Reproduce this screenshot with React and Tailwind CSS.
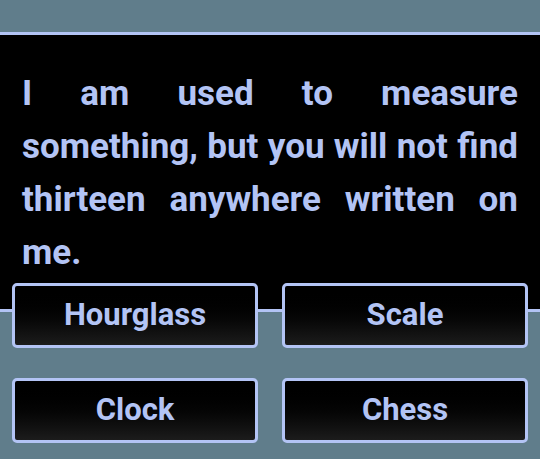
import React from "react";

const ANSWERS = ["Hourglass", "Scale", "Clock", "Chess"];

const AnswerButton = ({ label }) => (
  <button className="h-[65px] rounded-[5px] border-[3px] border-[#b3c4f5] bg-gradient-to-b from-[#000000] to-[#1c1c1c] text-[31px] font-bold text-[#b3c4f5]">
    {label}
  </button>
);

export default function App() {
  return (
    <div
      className="h-[459px] w-[540px] overflow-hidden bg-[#607d8b] pt-[32px]"
      style={{ fontFamily: "Roboto, 'Liberation Sans', sans-serif" }}
    >
      {/* Question */}
      <div className="border-y-[3px] border-[#b3c4f5] bg-black px-[22px] pt-[32px] pb-[30px]">
        <p className="text-justify text-[35px] font-bold leading-[53px] text-[#b3c4f5]">
          I am used to measure something, but you will not find thirteen anywhere written on me.
        </p>
      </div>

      {/* Answers */}
      <div className="-mt-[29px] grid grid-cols-2 gap-x-[24px] gap-y-[30px] px-[12px]">
        {ANSWERS.map(a => (
          <AnswerButton key={a} label={a} />
        ))}
      </div>
    </div>
  );
}
